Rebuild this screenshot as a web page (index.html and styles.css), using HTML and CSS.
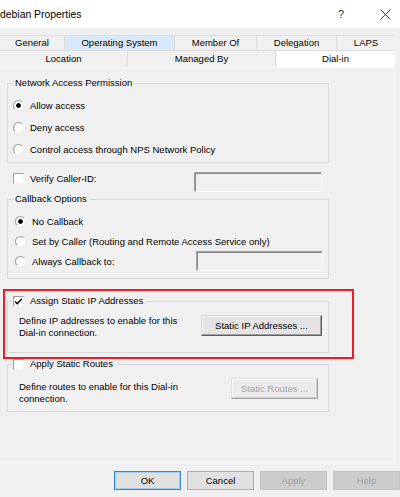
FILE: index.html
```html
<!DOCTYPE html>
<html>
<head>
<meta charset="utf-8">
<link rel="stylesheet" href="styles.css">
</head>
<body>
<div class="window">
  <div class="titlebar">
    <span class="title">debian Properties</span>
    <span class="help">?</span>
    <span class="close"><svg width="11" height="11" viewBox="0 0 11 11"><path d="M0.5 0.5 L10.5 10.5 M10.5 0.5 L0.5 10.5" stroke="#333" stroke-width="1" fill="none"/></svg></span>
  </div>
  <div class="tabs">
    <div class="tabrow row1">
      <div class="tab t-general">General</div>
      <div class="tab t-os hover">Operating System</div>
      <div class="tab t-member">Member Of</div>
      <div class="tab t-deleg">Delegation</div>
      <div class="tab t-laps">LAPS</div>
    </div>
    <div class="tabrow row2">
      <div class="tab t-location">Location</div>
      <div class="tab t-managed">Managed By</div>
      <div class="tab t-dialin selected">Dial-in</div>
    </div>
  </div>
  <div class="panel">
    <fieldset class="group g-nap">
      <legend>Network Access Permission</legend>
      <div class="opt"><span class="radio on"></span><span>Allow access</span></div>
      <div class="opt"><span class="radio"></span><span>Deny access</span></div>
      <div class="opt"><span class="radio"></span><span>Control access through NPS Network Policy</span></div>
    </fieldset>
    <div class="verify">
      <span class="check"></span><span class="vlabel">Verify Caller-ID:</span><span class="textbox tb-verify"></span>
    </div>
    <fieldset class="group g-cb">
      <legend>Callback Options</legend>
      <div class="opt"><span class="radio on"></span><span>No Callback</span></div>
      <div class="opt"><span class="radio"></span><span>Set by Caller (Routing and Remote Access Service only)</span></div>
      <div class="opt"><span class="radio"></span><span>Always Callback to:</span><span class="textbox tb-always"></span></div>
    </fieldset>
    <fieldset class="group g-ip">
      <legend class="chklegend"><span class="check on"><svg width="11" height="11" viewBox="0 0 11 11"><path d="M2 5.5 L4.3 7.8 L8.8 2.8" stroke="#000" stroke-width="1.4" fill="none"/></svg></span><span>Assign Static IP Addresses</span></legend>
      <div class="grow">
        <div class="desc">Define IP addresses to enable for this<br>Dial-in connection.</div>
        <div class="btn3d b-ip">Static IP Addresses ...</div>
      </div>
    </fieldset>
    <fieldset class="group g-rt">
      <legend class="chklegend"><span class="check"></span><span>Apply Static Routes</span></legend>
      <div class="grow">
        <div class="desc">Define routes to enable for this Dial-in<br>connection.</div>
        <div class="btn3d disabled b-rt">Static Routes ...</div>
      </div>
    </fieldset>
    <div class="highlight"></div>
  </div>
  <div class="footer">
    <div class="btn default">OK</div>
    <div class="btn">Cancel</div>
    <div class="btn off">Apply</div>
    <div class="btn off">Help</div>
  </div>
</div>
</body>
</html>
```

FILE: styles.css
```css
* { box-sizing: border-box; }
html, body { margin: 0; padding: 0; }
body {
  width: 400px;
  height: 497px;
  overflow: hidden;
  background: #f0f0f0;
  font-family: "Liberation Sans", Arial, sans-serif;
  font-size: 9.5px;
  color: #000;
}
.window { width: 400px; height: 497px; }

.titlebar {
  height: 28px;
  background: #fff;
  display: flex;
  align-items: center;
}
.title { flex: 1; font-size: 10.4px; padding-left: 0; }
.help { width: 20px; text-align: center; font-size: 11px; color: #333; margin-right: 22px; }
.close { width: 24px; margin-right: 3px; display: flex; justify-content: center; align-items: center; }

.tabs { margin-top: 7px; width: 395px; }
.tabrow { display: flex; border-top: 1px solid #dedede; }
.row1 { height: 15px; }
.row2 { height: 17px; }
.tab {
  border-right: 1px solid #dadada;
  text-align: center;
  white-space: nowrap;
}
.row1 .tab { line-height: 14px; }
.row2 .tab { line-height: 16px; }
.tab:last-child { border-right: none; }
.hover { background: #d8eaf9; }
.selected { background: #fff; }
.t-general { width: 65px; }
.t-os { width: 110px; }
.t-member { width: 82px; }
.t-deleg { width: 80px; }
.t-laps { width: 58px; }
.t-location { width: 128px; }
.t-managed { width: 148px; }
.t-dialin { width: 119px; }

.panel {
  position: relative;
  width: 395px;
  height: 396px;
  border-top: 1px solid #fff;
  border-right: 1px solid #fff;
  border-bottom: 1px solid #fff;
}

.group {
  margin: 0 0 0 7px;
  width: 322px;
  border: 1px solid #d9d9d9;
  padding: 0;
  min-width: 0;
}
.group legend {
  line-height: 12px;
  height: 12px;
  margin-left: 5px;
  padding: 0 2px;
}
.group legend.chklegend {
  display: flex;
  align-items: center;
  gap: 6px;
  margin-left: 4px;
  padding: 0 3px 0 1px;
}

.opt { display: flex; align-items: center; gap: 6px; }

.g-nap { margin-top: 9px; padding: 5px 0 2px 0; }
.g-nap .opt { height: 22px; padding-left: 5px; }

.verify {
  margin: 9px 0 0 13px;
  width: 309px;
  height: 20px;
  display: flex;
  align-items: flex-start;
  gap: 6px;
}
.verify .check { margin-top: 1px; }
.vlabel { line-height: 12px; margin-top: 0.5px; }
.tb-verify { margin-left: auto; width: 128px; height: 20px; }

.g-cb { margin-top: 1px; padding: 6px 0 7px 0; }
.g-cb .opt { height: 20px; padding-left: 7px; }
.tb-always { margin-left: auto; margin-right: 5px; width: 127px; height: 20px; }

.g-ip { margin-top: 16px; padding: 8px 0 14px 0; }
.g-rt { margin-top: 5px; padding: 11px 0 7px 0; }

.grow { display: flex; align-items: flex-start; padding-left: 11px; }
.desc { line-height: 11.5px; white-space: nowrap; }

.radio {
  width: 11px;
  height: 11px;
  flex: none;
  border-radius: 50%;
  background: #fff;
  border: 1px solid;
  border-color: #9c9c9c #f2f2f2 #f2f2f2 #9c9c9c;
}
.radio.on { background: radial-gradient(circle, #000 0 2px, #fff 2.6px); }

.check {
  width: 11px;
  height: 11px;
  flex: none;
  background: #fff;
  border: 1px solid;
  border-color: #a0a0a0 #f4f4f4 #f4f4f4 #a0a0a0;
  display: flex;
  align-items: center;
  justify-content: center;
}
.check svg { display: block; margin: -1px; }

.textbox {
  flex: none;
  background: #f0f0f0;
  border: 1px solid;
  border-color: #a0a0a0 #fdfdfd #fdfdfd #a0a0a0;
  box-shadow: inset 1px 1px 0 #8a8a8a;
}

.btn3d {
  flex: none;
  height: 21px;
  line-height: 19px;
  text-align: center;
  background: #e4e4e4;
  border: 1px solid;
  border-color: #d4d4d4 #5e5e5e #5e5e5e #d4d4d4;
  box-shadow: inset -1px -1px 0 #a0a0a0, inset 1px 1px 0 #fafafa;
}
.btn3d.disabled {
  color: #a2a2a2;
  background: #ebebeb;
  border-color: #e0e0e0 #a4a4a4 #a4a4a4 #e0e0e0;
  box-shadow: inset -1px -1px 0 #cfcfcf, inset 1px 1px 0 #fafafa;
}
.b-ip { margin-left: auto; margin-right: 6px; width: 121px; }
.b-rt { margin-left: auto; margin-right: 10px; width: 87px; margin-top: -3px; }

.highlight {
  position: absolute;
  left: 3px;
  top: 221px;
  width: 351px;
  height: 70px;
  border: 2px solid #ef1c25;
  pointer-events: none;
}

.footer {
  margin-top: 8px;
  padding-left: 114px;
  display: flex;
  gap: 6px;
}
.btn {
  flex: none;
  width: 67px;
  height: 19px;
  line-height: 17px;
  text-align: center;
  background: #e1e1e1;
  border: 1px solid #adadad;
}
.btn.default {
  border-color: #2f86d8;
  box-shadow: inset 0 0 0 1px #a9cdef;
}
.btn.off {
  background: #cccccc;
  border-color: #c4c4c4;
  color: #a0a0a0;
}
```
